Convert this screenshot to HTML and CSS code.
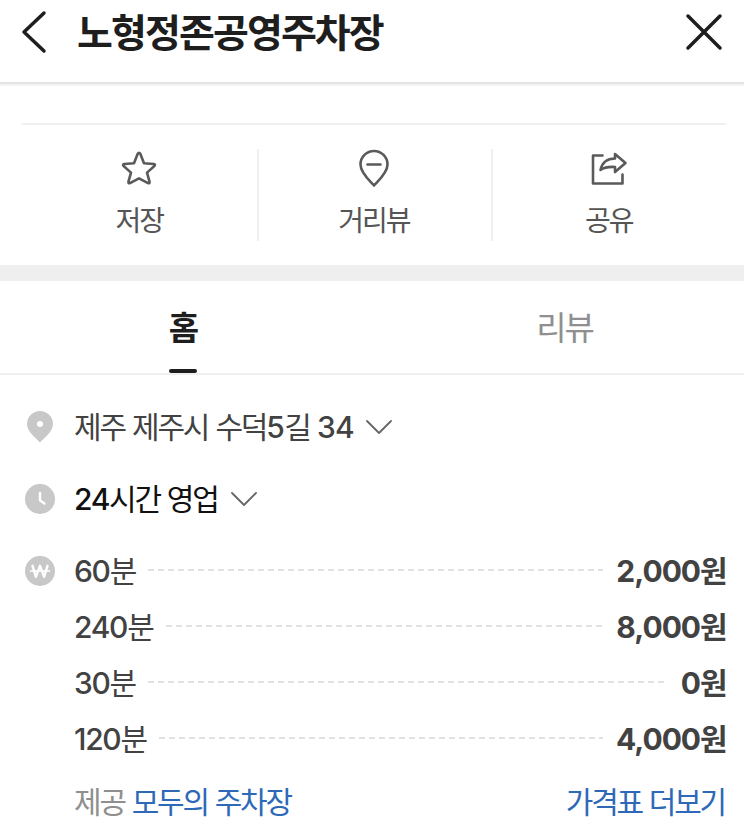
FILE: index.html
```html
<!DOCTYPE html>
<html lang="ko">
<head>
    <meta charset="UTF-8">
    <meta name="viewport" content="width=device-width, initial-scale=1.0">
    <title>노형정존공영주차장</title>
    <link rel="stylesheet" href="styles.css">
</head>
<body>
    <header class="header">
        <svg class="icon-back" width="28" height="44" viewBox="0 0 28 44"><path d="M24 3 4 22l20 19"/></svg>
        <h1>노형정존공영주차장</h1>
        <svg class="icon-close" width="40" height="40" viewBox="0 0 40 40"><path d="M4 4l32 32M36 4 4 36"/></svg>
    </header>

    <div class="actions">
        <div class="action">
            <svg width="40" height="40" viewBox="0 0 40 40"><path d="M18.700 4.800q1.300-2 2.600 0L25 14.300l9.800.7q1.900.4.6 2L28 23.600l2.600 9.300q.1 1.900-1.600 1.200L20 29.300l-9 4.800q-1.700.7-1.600-1.200L12 23.600 4.600 17q-1.300-1.600.6-2l9.800-.7z"/></svg>
            <span>저장</span>
        </div>
        <div class="action">
            <svg width="40" height="40" viewBox="0 0 40 40"><path d="M20 36.500C16 32 6.500 24 6.500 15.500a13.500 13.500 0 0 1 27 0C33.500 24 24 32 20 36.500zM13.500 15.500h13"/></svg>
            <span>거리뷰</span>
        </div>
        <div class="action">
            <svg width="40" height="40" viewBox="0 0 40 40"><path d="M13.500 6.500H4v28h29.500V25.500M11.500 21C13 14 18 9.500 26 9.500V5L36.500 14 26 23V18C19 17.500 15 18.500 11.500 21z"/></svg>
            <span>공유</span>
        </div>
    </div>

    <nav class="tabs">
        <a class="tab active">홈</a>
        <a class="tab">리뷰</a>
    </nav>

    <main class="info">
        <div class="row">
            <svg class="row-icon" width="30" height="34" viewBox="0 0 30 34"><path d="M15 32.500C11 28 2 21.500 2 14a13 13 0 0 1 26 0c0 7.500-9 14-13 18.500z"/><circle class="hole" cx="15" cy="14" r="3"/></svg>
            <span class="text address">제주 제주시 수덕<span class="num">5</span>길 <span class="num">34</span></span>
            <svg class="arrow" width="26" height="16" viewBox="0 0 26 16"><path d="M1 2l12 12L25 2"/></svg>
        </div>
        <div class="row">
            <svg class="row-icon" width="30" height="30" viewBox="0 0 30 30"><circle cx="15" cy="15" r="15"/><path class="line" d="M15 9v7.500l4.500 3"/></svg>
            <span class="text open"><span class="num">24</span>시간 영업</span>
            <svg class="arrow" width="26" height="16" viewBox="0 0 26 16"><path d="M1 2l12 12L25 2"/></svg>
        </div>
        <div class="row price-row">
            <svg class="row-icon" width="30" height="30" viewBox="0 0 30 30"><circle cx="15" cy="15" r="15"/><path class="line" d="M7.500 9.800l3.400 11L15 9.800l4.100 11 3.400-11"/><path class="line thin" d="M5.500 15h19"/></svg>
            <ul class="prices">
                <li><span class="text"><span class="num">60</span>분</span><i class="dots"></i><strong><span class="num">2,000</span>원</strong></li>
                <li><span class="text"><span class="num">240</span>분</span><i class="dots"></i><strong><span class="num">8,000</span>원</strong></li>
                <li><span class="text"><span class="num">30</span>분</span><i class="dots"></i><strong><span class="num">0</span>원</strong></li>
                <li><span class="text"><span class="num">120</span>분</span><i class="dots"></i><strong><span class="num">4,000</span>원</strong></li>
            </ul>
        </div>
        <div class="source">
            <span>제공 <a>모두의 주차장</a></span>
            <a>가격표 더보기</a>
        </div>
    </main>
</body>
</html>
```
FILE: styles.css
```css
* {
    box-sizing: border-box;
}

body {
    margin: 0;
    background-color: #fff;
    color: #424242;
    font-family: Inter, "Noto Sans CJK KR", sans-serif;
    font-size: 30px;
    letter-spacing: -2.2px;
    word-spacing: 0.6px;
}

svg {
    flex: none;
    fill: none;
    stroke-linecap: round;
    stroke-linejoin: round;
}

.header {
    display: flex;
    align-items: center;
    height: 84px;
    padding: 0 20px 18px;
    border-bottom: 2px solid #e3e3e3;
    box-shadow: 0 2px 0 #f4f4f4;
}

.header h1 {
    flex: 1;
    margin: 2px 0 0 29px;
    color: #1e1e1e;
    font-size: 39px;
    line-height: 60px;
    letter-spacing: -1.9px;
}

.icon-back,
.icon-close {
    stroke: #1e1e1e;
    stroke-width: 3.5;
}

.actions {
    display: grid;
    grid-template-columns: repeat(3, 1fr);
    margin: 39px 18px 0 22px;
    padding: 24px 0;
    border-top: 2px solid #f0f0f0;
}

.action {
    display: flex;
    flex-direction: column;
    align-items: center;
    height: 92px;
    color: #555;
    font-size: 28px;
    line-height: 40px;
    letter-spacing: -2px;
}

.action + .action {
    padding-right: 2px;
    border-left: 2px solid #efefef;
}

.action svg {
    margin-bottom: 12px;
    stroke: #5a5a5a;
    stroke-width: 2.6;
}

.tabs {
    display: grid;
    grid-template-columns: 366px 1fr;
    height: 110px;
    border-top: 16px solid #efefef;
    border-bottom: 2px solid #efefef;
}

.tab {
    display: flex;
    justify-content: center;
    padding-left: 19px;
    color: #8f8f8f;
    font-size: 33px;
    line-height: 94px;
    letter-spacing: -2px;
}

.tab.active {
    position: relative;
    padding-left: 0;
    color: #1e1e1e;
    font-weight: bold;
}

.tab.active::after {
    content: "";
    position: absolute;
    bottom: 2px;
    left: 169px;
    width: 28px;
    height: 4px;
    border-radius: 2px;
    background-color: #1e1e1e;
}

.info {
    padding: 24px 18px 0 25px;
}

.row {
    display: flex;
    align-items: center;
    height: 56px;
    margin-bottom: 16px;
    line-height: 56px;
    white-space: nowrap;
}

.row-icon {
    margin-right: 19px;
    fill: #c8c8c8;
}

.row-icon .hole {
    fill: #fff;
}

.row-icon .line {
    fill: none;
    stroke: #fff;
    stroke-width: 2.4;
}

.row-icon .thin {
    stroke-width: 1.6;
}

.open {
    color: #111;
}

.num {
    letter-spacing: -1.3px;
}

.text .num {
    font-weight: 450;
}

.address {
    word-spacing: 1px;
}

.address .num {
    letter-spacing: -0.6px;
}

.arrow {
    margin-left: 12px;
    stroke: #666;
    stroke-width: 1.8;
}

.open + .arrow {
    margin-left: 13px;
}

.price-row {
    align-items: flex-start;
    height: auto;
    margin-bottom: 0;
}

.price-row .row-icon {
    margin-top: 13px;
}

.prices {
    flex: 1;
    margin: 0;
    padding: 0;
    list-style: none;
}

.prices li {
    display: flex;
    align-items: center;
    height: 56px;
}

.dots {
    flex: 1;
    height: 2px;
    margin: 0 13px 2px 13px;
    background: repeating-linear-gradient(90deg, #e1e1e1 0 6px, transparent 6px 10px);
}

.prices strong {
    margin-right: 0.5px;
}

.prices strong .num {
    letter-spacing: -1px;
}

.source {
    display: flex;
    justify-content: space-between;
    margin-left: 49px;
    padding-right: 1px;
    color: #8f8f8f;
    line-height: 71px;
}

.source a {
    color: #2e69b8;
}
```
